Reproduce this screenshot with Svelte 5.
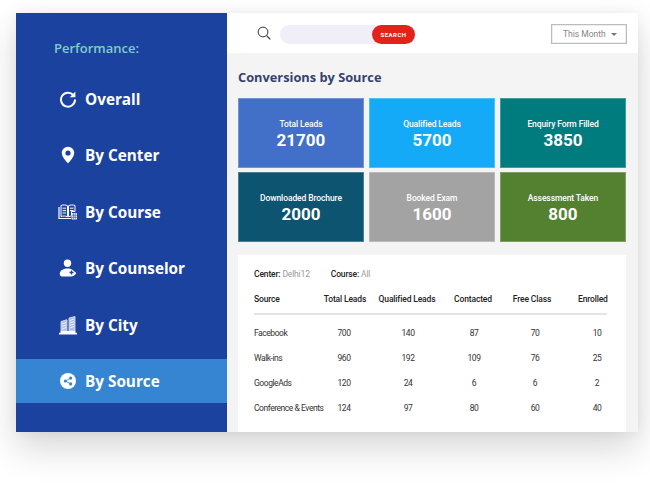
<script>
  const nav = [
    { label: 'Overall', icon: 'refresh' },
    { label: 'By Center', icon: 'pin' },
    { label: 'By Course', icon: 'book' },
    { label: 'By Counselor', icon: 'person' },
    { label: 'By City', icon: 'city' },
    { label: 'By Source', icon: 'share', active: true }
  ];
  const cards = [
    { label: 'Total Leads', value: 21700, tone: 'blue' },
    { label: 'Qualified Leads', value: 5700, tone: 'sky' },
    { label: 'Enquiry Form Filled', value: 3850, tone: 'teal' },
    { label: 'Downloaded Brochure', value: 2000, tone: 'navy' },
    { label: 'Booked Exam', value: 1600, tone: 'grey' },
    { label: 'Assessment Taken', value: 800, tone: 'green' }
  ];
  const heads = ['Source', 'Total Leads', 'Qualified Leads', 'Contacted', 'Free Class', 'Enrolled'];
  const rows = [
    ['Facebook', 700, 140, 87, 70, 10],
    ['Walk-ins', 960, 192, 109, 76, 25],
    ['GoogleAds', 120, 24, 6, 6, 2],
    ['Conference & Events', 124, 97, 80, 60, 40]
  ];
</script>

<div class="page">
  <div class="window">
    <aside class="side">
      <h2>Performance:</h2>
      <ul>
        {#each nav as item}
          <li class:active={item.active}>
            <span class="ico">
              {#if item.icon === 'refresh'}
                <svg viewBox="0 0 18 18" width="18" height="18"><path d="M14.400 5.200A7 7 0 1 0 16 9.600" fill="none" stroke="#fff" stroke-width="2"/><path d="M16.400 1.600v5.600h-5.600z" fill="#fff"/></svg>
              {:else if item.icon === 'pin'}
                <svg viewBox="0 0 18 18" width="18" height="18"><path fill-rule="evenodd" d="M9 .8a6.200 6.200 0 0 0-6.200 6.200c0 4.200 6.200 10.400 6.200 10.400s6.200-6.200 6.200-10.400A6.200 6.200 0 0 0 9 .8zm0 3.600a2.600 2.600 0 1 1 0 5.200 2.600 2.600 0 0 1 0-5.200z" fill="#fff"/></svg>
              {:else if item.icon === 'book'}
                <svg viewBox="0 0 20 18" width="20" height="18"><path d="M3 2.500c2-.8 4.600-.8 6.500.3v11c-1.900-1-4.500-1-6.500-.3zM10.500 2.800c2-1.100 4.500-1.100 6.500-.3v6h-3.500v4.300l-3 1z" fill="#1c42a0" stroke="#fff" stroke-width="1"/><path d="M4.500 5.200h3.600M4.500 7.600h3.600M4.500 10h3.600M12 5.200h3.500M12 7.600h3.500" stroke="#fff" stroke-width="1"/><path d="M1 4v11.500h12" fill="none" stroke="#fff" stroke-width="1.200"/><rect x="13.500" y="10" width="5.500" height="6.500" rx=".8" fill="#fff"/><path d="M15.300 10v6.500M17.200 10v6.500M13.500 12.200h5.500M13.500 14.300h5.500" stroke="#1c42a0" stroke-width=".6"/></svg>
              {:else if item.icon === 'person'}
                <svg viewBox="0 0 18 18" width="18" height="18"><circle cx="8.500" cy="4.200" r="3.700" fill="#fff"/><path d="M.8 14.800c0-3 3-5.300 7.700-5.300 2 0 3.600.4 4.900 1.200l3.800 3.300c-.8 2-2.900 3.500-5.500 3.500H3c-1.300 0-2.200-.9-2.200-2.700z" fill="#fff"/><path d="M12.500 11.500v4M10.500 13.500h4" stroke="#1c42a0" stroke-width="1.300"/></svg>
              {:else if item.icon === 'city'}
                <svg viewBox="0 0 20 20" width="20" height="20"><path d="M3 6.500l6-1.800V16H3zM11 3l6-1.500V16h-6z" fill="#aebde2" stroke="#e3e9f8" stroke-width=".8"/><path d="M4 9l4-1.500M4 11.500l4-1.500M4 14l4-1.500M12 5.500l4-1.500M12 8l4-1.500M12 10.500l4-1.500M12 13l4-1.500" stroke="#fff" stroke-width=".8"/><path d="M1 18.700h18M2.500 16.800h15" stroke="#fff" stroke-width="1.700"/><path d="M5 16v2M9 16v2M13 16v2" stroke="#fff" stroke-width="1.300"/></svg>
              {:else}
                <svg viewBox="0 0 18 18" width="16" height="16"><circle cx="9" cy="9" r="9" fill="#fff"/><circle cx="6" cy="9" r="1.800" fill="#3585d3"/><circle cx="12" cy="5.700" r="1.800" fill="#3585d3"/><circle cx="12" cy="12.300" r="1.800" fill="#3585d3"/><path d="M12 5.700L6 9l6 3.300" fill="none" stroke="#3585d3" stroke-width="1"/></svg>
              {/if}
            </span>
            <span>{item.label}</span>
          </li>
        {/each}
      </ul>
    </aside>
    <main class="main">
      <header class="top">
        <svg class="lens" viewBox="0 0 14 14" width="14" height="14"><circle cx="6" cy="6" r="4.900" fill="none" stroke="#333" stroke-width="1"/><path d="M9.600 9.600l3.700 3.700" stroke="#333" stroke-width="1.200"/></svg>
        <div class="search"><button>SEARCH</button></div>
        <div class="month"><span>This Month</span><i></i></div>
      </header>
      <section class="body">
        <h1>Conversions by Source</h1>
        <div class="cards">
          {#each cards as c}
            <div class="card {c.tone}">
              <div class="lbl">{c.label}</div>
              <div class="val">{c.value}</div>
            </div>
          {/each}
        </div>
        <div class="panel">
          <p class="meta"><b>Center:</b> <span>Delhi12</span><b class="second">Course:</b> <span>All</span></p>
          <div class="grid heads">
            {#each heads as h}<div>{h}</div>{/each}
          </div>
          {#each rows as r}
            <div class="grid row">
              {#each r as v}<div>{v}</div>{/each}
            </div>
          {/each}
        </div>
      </section>
    </main>
  </div>
</div>

<style>
  :global(body) { margin: 0; background: #fff; }
  .page { width: 650px; height: 485px; box-sizing: border-box; padding: 13px 12px 53px 16px; overflow: hidden; display: flex; }
  .window { flex: 1; min-width: 0; display: flex; box-shadow: 0 16px 34px rgba(0,0,0,.16), 0 0 12px rgba(0,0,0,.05); background: #f4f4f4; }
  .side { width: 211px; flex: none; background: #1c42a0; color: #fff; font-family: "Open Sans", sans-serif; }
  h2 { margin: 0; padding: 26px 0 0 38px; font-size: 13px; line-height: 18px; font-weight: 600; color: #7fcdc8; }
  ul { list-style: none; margin: 20px 0 0; padding: 0; }
  li { height: 44px; margin-bottom: 12.400px; display: flex; align-items: center; font-size: 15.300px; font-weight: 700; }
  li.active { background: #3585d3; }
  .ico { width: 69px; padding-left: 34px; box-sizing: border-box; display: flex; justify-content: center; }
  .ico svg { display: block; }
  .main { flex: 1; min-width: 0; display: flex; flex-direction: column; }
  .top { height: 40px; background: #fff; display: flex; align-items: center; padding: 0 11px 0 30px; flex: none; }
  .lens { margin-top: -1px; }
  .search { margin: 3px 0 0 9px; width: 135px; height: 19px; border-radius: 10px; background: #f0eef6; display: flex; justify-content: flex-end; }
  .search button { width: 43px; height: 19px; border: 0; padding: 0; border-radius: 10px; background: #e2231a; color: #fff; font: 700 6px Roboto, sans-serif; letter-spacing: .5px; }
  .month { margin: 2px 0 0 auto; width: 76px; height: 20px; box-sizing: border-box; border: 1px solid #bcbcbc; box-shadow: inset 0 0 0 .5px #ddd; display: flex; align-items: center; padding: 0 9px 0 11px; justify-content: space-between; font: 400 8.500px Roboto, sans-serif; color: #868686; }
  .month i { width: 0; height: 0; border: 3px solid transparent; border-top: 3px solid #777; border-bottom: 0; }
  .body { flex: 1; padding: 0 12px 0 11px; display: flex; flex-direction: column; min-height: 0; }
  h1 { margin: 15px 0 12px; font: 700 12.800px/18px "Open Sans", sans-serif; color: #34426e; }
  .cards { display: grid; grid-template-columns: repeat(3, 126px); grid-auto-rows: 70px; column-gap: 5px; row-gap: 4px; }
  .card { box-sizing: border-box; border: 1px solid rgba(255,255,255,.25); color: #fff; text-align: center; font-family: Roboto, sans-serif; padding-top: 19px; }
  .lbl { font-size: 8.500px; line-height: 12px; font-weight: 500; letter-spacing: -.1px; }
  .val { font-size: 17px; line-height: 20px; font-weight: 700; }
  .blue { background: #4270c8; } .sky { background: #15aaf8; } .teal { background: #007c7e; }
  .navy { background: #0c5470; } .grey { background: #a3a3a3; } .green { background: #548130; }
  .panel { margin-top: 13px; flex: 1; background: #fff; padding: 0 19px 0 16px; font-family: Roboto, sans-serif; font-size: 8.500px; letter-spacing: -.45px; color: #333; }
  .meta { margin: 13px 0 0; line-height: 12px; font-size: 8.500px; letter-spacing: -.15px; color: #999; }
  .meta b { color: #222; font-weight: 500; }
  .second { margin-left: 21px; }
  .grid { display: grid; text-align: center; white-space: nowrap; }
  .grid > div:first-child { text-align: left; }
  .heads { grid-template-columns: 68px 46px 78px 54px 64px 43px; margin-top: 13px; padding-bottom: 8px; border-bottom: 2px solid #e4e4e4; color: #222; font-size: 8.500px; letter-spacing: -.15px; font-weight: 500; line-height: 12px; }
  .heads > div:last-child { padding-left: 14px; }
  .row { grid-template-columns: 68px 44px 84px 48px 74px 35px; height: 25.200px; align-items: center; }
  .row > div:last-child { padding-left: 15px; }
  .heads + .row { margin-top: 5px; }
</style>
